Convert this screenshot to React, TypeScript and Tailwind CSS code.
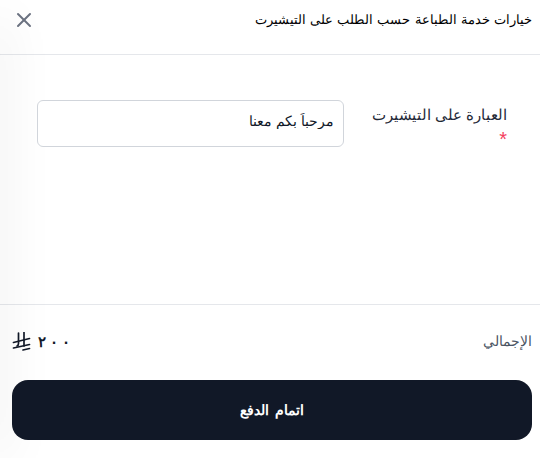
import React from 'react';
import { X } from 'lucide-react';

const RiyalIcon = () => (
  <svg width="19" height="19" viewBox="0 0 19 19" fill="none" stroke="#111827" strokeWidth="1.7" strokeLinecap="round">
    <path d="M6.5 1V11.5Q6.5 13.5 5 14" />
    <path d="M12 0.5V14" />
    <path d="M1.5 10.5L17.5 6.5" />
    <path d="M1.5 16L17.5 12.5" />
    <path d="M11 18L17.5 16.5" />
  </svg>
);

const App: React.FC = () => {
  return (
    <div
      dir="rtl"
      className="relative flex h-[458px] w-[540px] flex-col overflow-hidden bg-white text-gray-900 font-['Liberation_Sans',Arial,sans-serif]"
    >
      {/* ظل الجهة اليسرى */}
      <div className="pointer-events-none absolute -left-[10px] bottom-0 top-[20px] w-[10px] shadow-[0_0_50px_rgba(0,0,0,0.16)]" />

      <header className="flex h-[55px] shrink-0 items-center justify-between border-b border-[#e5e7eb] pb-[14px] pl-[12px] pr-[8px]">
        <h1 className="text-[13px] font-normal text-black [word-spacing:0.6px]">خيارات خدمة الطباعة حسب الطلب على التيشيرت</h1>
        <button className="relative text-[#6b7280]">
          <X size={24} strokeWidth={2} />
        </button>
      </header>

      <main className="flex flex-1 items-start gap-[28px] pl-[37px] pr-[33px] pt-[45px]">
        <label className="w-[135px] shrink-0 whitespace-nowrap pt-[3px] text-[15px] leading-[24px] text-[#1f2937]">
          العبارة على التيشيرت
          <span className="block text-[20px] leading-[24px] text-[#f43f5e]">*</span>
        </label>
        <input
          dir="rtl"
          defaultValue="مرحباً بكم معنا"
          className="relative h-[47px] flex-1 rounded-[6px] border border-[#d1d5db] bg-white pb-[5px] pl-[10px] pr-[9px] text-[14px] text-gray-900 outline-none"
        />
      </main>

      <footer className="shrink-0 border-t border-[#e5e7eb] px-[8px] pb-[18px] pt-[26px]">
        <div className="mb-[27px] flex items-center justify-between pl-[4px]">
          <span className="text-[14px] text-[#4b5563]">الإجمالي</span>
          <span className="relative flex items-center gap-[7px] text-[15px] font-bold text-[#111827]">
            <span dir="ltr" className="flex gap-[4px]">
              <span>٢</span>
              <span>٠</span>
              <span>٠</span>
            </span>
            <RiyalIcon />
          </span>
        </div>
        <button className="relative h-[60px] w-[520px] rounded-[16px] bg-[#111827] text-[14px] font-bold text-white [word-spacing:3px]">
          اتمام الدفع
        </button>
      </footer>
    </div>
  );
};

export default App;
